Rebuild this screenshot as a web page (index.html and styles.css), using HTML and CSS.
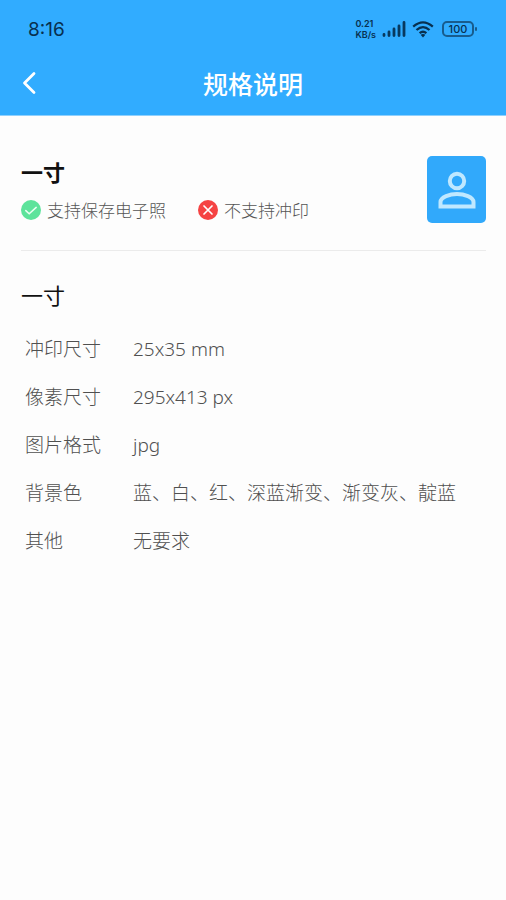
FILE: index.html
```html
<!DOCTYPE html>
<html lang="zh-CN">
<head>
<meta charset="utf-8">
<meta name="viewport" content="width=device-width, initial-scale=1">
<title>规格说明</title>
<link rel="stylesheet" href="styles.css">
</head>
<body>
<header class="top">
  <div class="status">
    <time class="clock">8:16</time>
    <div class="indicators">
      <div class="speed"><span>0.21</span><span>KB/s</span></div>
      <svg class="signal" width="24" height="16" viewBox="0 0 24 16" aria-hidden="true"><path d="M2 13.500V14.500M7 11V14.500M12 8V14.500M17 5V14.500M22 1.500V14.500" fill="none" stroke="#08395f" stroke-width="2.8" stroke-linecap="round"/></svg>
      <svg class="wifi" width="22" height="17" viewBox="0 0 22 17" aria-hidden="true"><path d="M1.2 5.6Q11-2.8 20.8 5.6M4.5 9Q11 3.2 17.5 9M7.6 12.2Q11 9.4 14.4 12.2" fill="none" stroke="#08304f" stroke-width="2.3"/><path d="M8.6 13.8Q11 12 13.4 13.8L11 16.5Z" fill="#08304f"/></svg>
      <div class="battery">100</div>
    </div>
  </div>
  <nav class="bar">
    <button class="back" type="button" aria-label="返回"><svg width="14" height="24" viewBox="0 0 14 24"><path d="M12 2.5 2.5 12 12 21.5" fill="none" stroke="#fff" stroke-width="2.8" stroke-linecap="round" stroke-linejoin="round"/></svg></button>
    <h1 class="title">规格说明</h1>
  </nav>
</header>
<main class="content">
  <section class="summary">
    <div class="info">
      <h2 class="name">一寸</h2>
      <ul class="features">
        <li class="feature"><svg width="20" height="20" viewBox="0 0 20 20" aria-hidden="true"><circle cx="10" cy="10" r="10" fill="#5de39b"/><path d="m4.8 10.6 3.4 3.2 7-6.4" fill="none" stroke="#e9fff2" stroke-width="1.5" stroke-linecap="round"/></svg>支持保存电子照</li>
        <li class="feature"><svg width="20" height="20" viewBox="0 0 20 20" aria-hidden="true"><circle cx="10" cy="10" r="10" fill="#f54343"/><path d="m6 6 8 8m0-8-8 8" fill="none" stroke="#fff" stroke-width="1.7" stroke-linecap="round"/></svg>不支持冲印</li>
      </ul>
    </div>
    <div class="photo"><svg width="38" height="38" viewBox="0 0 38 38" aria-hidden="true"><g fill="none" stroke="#bfe8ff" stroke-width="4"><circle cx="19" cy="10" r="7.2"/><path d="M2.5 35.5V31C2.5 25.8 12 23 19 23s16.500 2.800 16.500 8v4.500Z"/></g></svg></div>
  </section>
  <section class="details">
    <h2 class="subname">一寸</h2>
    <table class="specs">
      <tbody>
        <tr><th scope="row">冲印尺寸</th><td>25x35 mm</td></tr>
        <tr><th scope="row">像素尺寸</th><td>295x413 px</td></tr>
        <tr><th scope="row">图片格式</th><td>jpg</td></tr>
        <tr><th scope="row">背景色</th><td>蓝、白、红、深蓝渐变、渐变灰、靛蓝</td></tr>
        <tr><th scope="row">其他</th><td>无要求</td></tr>
      </tbody>
    </table>
  </section>
</main>
</body>
</html>
```
FILE: styles.css
```css
* {
  box-sizing: border-box;
}

body {
  margin: 0;
  background: #fdfdfd;
  color: #111;
  font-family: "Noto Sans CJK SC", sans-serif;
}

h1,
h2,
ul {
  margin: 0;
  padding: 0;
}

.top {
  background: #31acff;
  border-bottom: 1px solid #8fd0fd;
}

.status {
  display: flex;
  align-items: center;
  justify-content: space-between;
  height: 58px;
  padding: 0 32px 0 28px;
  color: #08304f;
}

.clock {
  font-family: Inter, sans-serif;
  font-size: 19px;
  font-weight: 400;
}

.indicators {
  display: flex;
  align-items: center;
  gap: 6px;
}

.speed {
  display: flex;
  flex-direction: column;
  font: 600 9px/11px Inter, sans-serif;
}

.battery {
  position: relative;
  width: 32px;
  height: 16px;
  margin-left: 2px;
  border: 2px solid #185c8d;
  border-radius: 5px;
  font: 500 11px/12px Inter, sans-serif;
  text-align: center;
}

.battery::after {
  content: "";
  position: absolute;
  top: 4px;
  right: -5px;
  width: 2px;
  height: 4px;
  border-radius: 1px;
  background: #185c8d;
}

.bar {
  display: grid;
  grid-template-columns: 60px 1fr 60px;
  align-items: center;
  height: 57px;
  padding-bottom: 8px;
}

.back {
  display: flex;
  width: 60px;
  padding: 0 0 0 22px;
  border: 0;
  background: none;
}

.title {
  color: #fff;
  font-size: 25px;
  font-weight: 500;
  line-height: 36px;
  text-align: center;
}

.content {
  padding: 40px 20px 40px 21px;
}

.summary {
  display: flex;
  justify-content: space-between;
  padding-bottom: 27px;
  border-bottom: 1px solid #ebebeb;
}

.name,
.subname {
  font-size: 22px;
  line-height: 30px;
}

.name {
  font-weight: 700;
}

.subname {
  font-weight: 400;
}

.features {
  display: flex;
  gap: 32px;
  margin-top: 12px;
  list-style: none;
}

.feature {
  display: flex;
  align-items: center;
  gap: 6px;
  color: #555;
  font-size: 17px;
  font-weight: 300;
  line-height: 24px;
}

.photo {
  display: flex;
  align-items: center;
  justify-content: center;
  width: 59px;
  height: 67px;
  border-radius: 5px;
  background: #31a9fb;
}

.details {
  padding-top: 28px;
}

.specs {
  width: 100%;
  margin-top: 16px;
  border-collapse: collapse;
  color: #505050;
  font-family: "Noto Sans", "Noto Sans CJK SC", sans-serif;
  font-size: 19px;
  line-height: 28px;
}

.specs th,
.specs td {
  padding: 10px 0;
  font-weight: 300;
  text-align: left;
}

.specs th {
  width: 112px;
  padding-left: 4px;
}
```
